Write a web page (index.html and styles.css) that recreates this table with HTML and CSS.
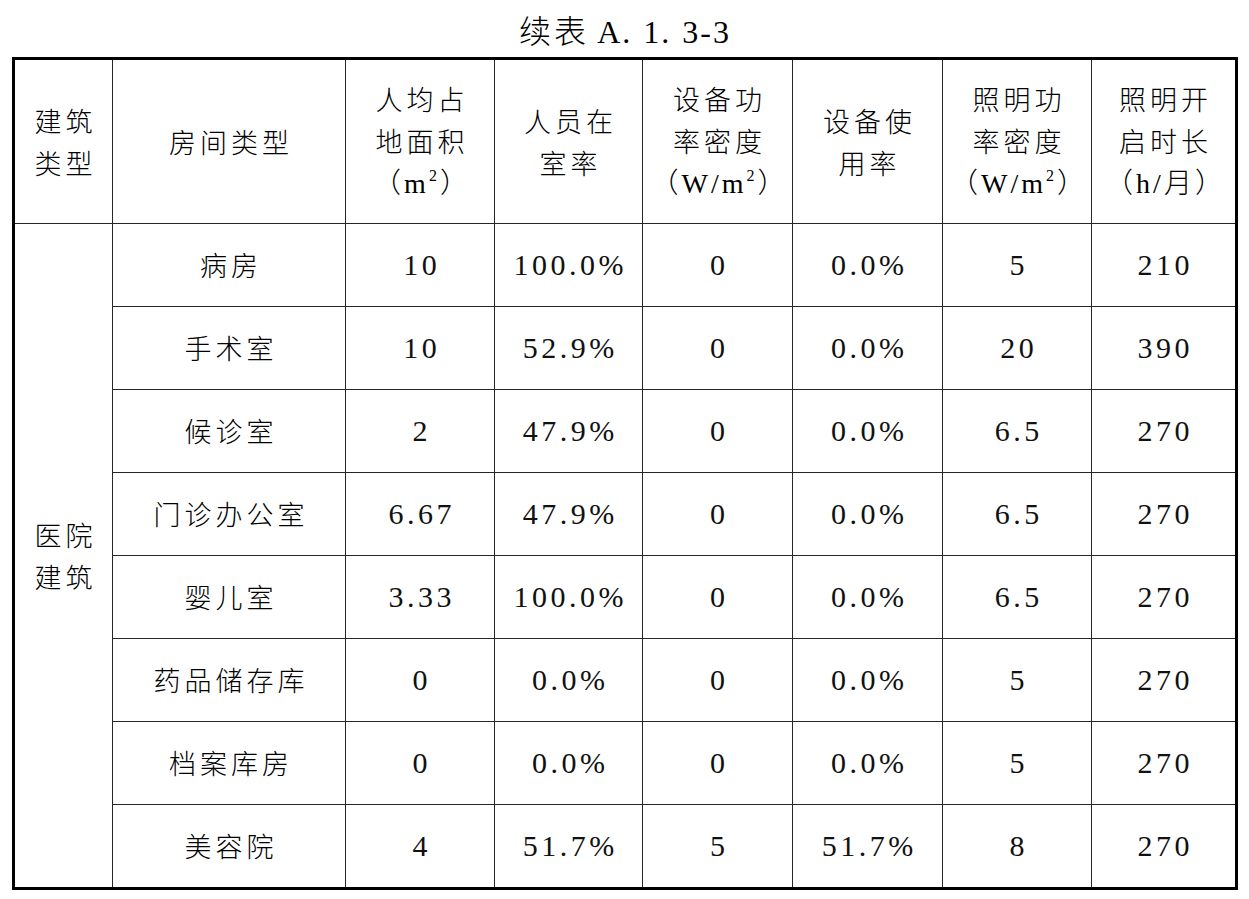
FILE: index.html
```html
<!DOCTYPE html>
<html lang="zh-CN">
<head>
<meta charset="utf-8">
<title>续表 A.1.3-3</title>
<link rel="stylesheet" href="styles.css">
</head>
<body>
<div class="page">
  <h1 class="title"><span class="title-cn">续表</span> <span class="title-no">A<span class="dot">.</span>1<span class="dot">.</span>3-3</span></h1>
  <div class="grid">
    <div class="cell head"><div class="in">建筑<br>类型</div></div>
    <div class="cell head"><div class="in">房间类型</div></div>
    <div class="cell head"><div class="in">人均占<br>地面积<br><span class="unit">（m<sup>2</sup>）</span></div></div>
    <div class="cell head"><div class="in">人员在<br>室率</div></div>
    <div class="cell head"><div class="in">设备功<br>率密度<br><span class="unit">（W/m<sup>2</sup>）</span></div></div>
    <div class="cell head"><div class="in">设备使<br>用率</div></div>
    <div class="cell head"><div class="in">照明功<br>率密度<br><span class="unit">（W/m<sup>2</sup>）</span></div></div>
    <div class="cell head"><div class="in">照明开<br>启时长<br><span class="unit">（h/月）</span></div></div>

    <div class="cell group"><div class="in">医院<br>建筑</div></div>

    <div class="cell"><div class="in">病房</div></div>
    <div class="cell num"><div class="in">10</div></div>
    <div class="cell num"><div class="in">100.0%</div></div>
    <div class="cell num"><div class="in">0</div></div>
    <div class="cell num"><div class="in">0.0%</div></div>
    <div class="cell num"><div class="in">5</div></div>
    <div class="cell num"><div class="in">210</div></div>

    <div class="cell"><div class="in">手术室</div></div>
    <div class="cell num"><div class="in">10</div></div>
    <div class="cell num"><div class="in">52.9%</div></div>
    <div class="cell num"><div class="in">0</div></div>
    <div class="cell num"><div class="in">0.0%</div></div>
    <div class="cell num"><div class="in">20</div></div>
    <div class="cell num"><div class="in">390</div></div>

    <div class="cell"><div class="in">候诊室</div></div>
    <div class="cell num"><div class="in">2</div></div>
    <div class="cell num"><div class="in">47.9%</div></div>
    <div class="cell num"><div class="in">0</div></div>
    <div class="cell num"><div class="in">0.0%</div></div>
    <div class="cell num"><div class="in">6.5</div></div>
    <div class="cell num"><div class="in">270</div></div>

    <div class="cell"><div class="in">门诊办公室</div></div>
    <div class="cell num"><div class="in">6.67</div></div>
    <div class="cell num"><div class="in">47.9%</div></div>
    <div class="cell num"><div class="in">0</div></div>
    <div class="cell num"><div class="in">0.0%</div></div>
    <div class="cell num"><div class="in">6.5</div></div>
    <div class="cell num"><div class="in">270</div></div>

    <div class="cell"><div class="in">婴儿室</div></div>
    <div class="cell num"><div class="in">3.33</div></div>
    <div class="cell num"><div class="in">100.0%</div></div>
    <div class="cell num"><div class="in">0</div></div>
    <div class="cell num"><div class="in">0.0%</div></div>
    <div class="cell num"><div class="in">6.5</div></div>
    <div class="cell num"><div class="in">270</div></div>

    <div class="cell"><div class="in">药品储存库</div></div>
    <div class="cell num"><div class="in">0</div></div>
    <div class="cell num"><div class="in">0.0%</div></div>
    <div class="cell num"><div class="in">0</div></div>
    <div class="cell num"><div class="in">0.0%</div></div>
    <div class="cell num"><div class="in">5</div></div>
    <div class="cell num"><div class="in">270</div></div>

    <div class="cell"><div class="in">档案库房</div></div>
    <div class="cell num"><div class="in">0</div></div>
    <div class="cell num"><div class="in">0.0%</div></div>
    <div class="cell num"><div class="in">0</div></div>
    <div class="cell num"><div class="in">0.0%</div></div>
    <div class="cell num"><div class="in">5</div></div>
    <div class="cell num"><div class="in">270</div></div>

    <div class="cell"><div class="in">美容院</div></div>
    <div class="cell num"><div class="in">4</div></div>
    <div class="cell num"><div class="in">51.7%</div></div>
    <div class="cell num"><div class="in">5</div></div>
    <div class="cell num"><div class="in">51.7%</div></div>
    <div class="cell num"><div class="in">8</div></div>
    <div class="cell num"><div class="in">270</div></div>
  </div>
</div>
</body>
</html>
```

FILE: styles.css
```css
html, body {
  margin: 0;
  padding: 0;
  background: #fff;
}

body {
  color: #000;
  font-family: "Liberation Serif", "Noto Sans CJK SC", serif;
}

.page {
  width: 1226px;
  padding: 13px 0 0 12px;
}

.title {
  margin: 0 0 12px 0;
  height: 32px;
  font-size: 32px;
  line-height: 32px;
  font-weight: normal;
  text-align: center;
  white-space: nowrap;
}

.title-cn {
  font-family: "Noto Sans CJK SC", sans-serif;
  font-weight: 300;
  letter-spacing: 3px;
}

.title-no {
  font-family: "Liberation Serif", serif;
  letter-spacing: 2px;
}

.title-no .dot {
  margin-right: 11px;
}

.grid {
  display: grid;
  grid-template-columns: 97px 232px 148px 147px 149px 149px 148px 143px;
  grid-template-rows: 163px repeat(8, 82px);
  gap: 1px;
  background: #262626;
  border: 3px solid #000;
}

.cell {
  background: #fff;
  display: flex;
  align-items: center;
  justify-content: center;
  text-align: center;
  font-family: "Noto Sans CJK SC", sans-serif;
  font-size: 27px;
  line-height: 41.5px;
  letter-spacing: 4px;
  font-weight: 300;
}

.in {
  padding-left: 4px;
  white-space: nowrap;
}

.group {
  grid-column: 1;
  grid-row: 2 / span 8;
}

.num {
  font-family: "Liberation Serif", serif;
  font-size: 30px;
  letter-spacing: 3.5px;
  font-weight: normal;
  color: #111;
}

.num .in {
  padding-left: 3.5px;
}

.unit {
  font-family: "Liberation Serif", "Noto Sans CJK SC", serif;
  font-size: 28px;
  letter-spacing: 3px;
}

.unit sup {
  font-size: 16px;
  line-height: 0;
  vertical-align: 12px;
}
```
